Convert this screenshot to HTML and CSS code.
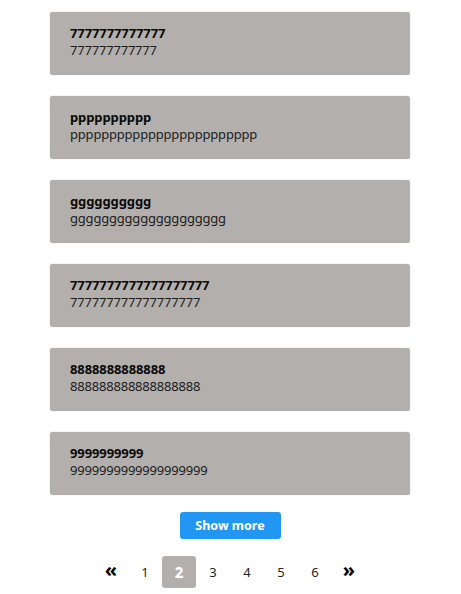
FILE: index.html
```html
<!DOCTYPE html>
<html>
<head>
<meta charset="utf-8">
<link rel="stylesheet" href="styles.css">
</head>
<body>
<div class="page">
  <div class="list">
    <div class="card"><div class="title">7777777777777</div><div class="sub">777777777777</div></div>
    <div class="card"><div class="title">pppppppppp</div><div class="sub">pppppppppppppppppppppppp</div></div>
    <div class="card"><div class="title">gggggggggg</div><div class="sub">gggggggggggggggggggg</div></div>
    <div class="card"><div class="title">7777777777777777777</div><div class="sub">777777777777777777</div></div>
    <div class="card"><div class="title">8888888888888</div><div class="sub">888888888888888888</div></div>
    <div class="card"><div class="title">9999999999</div><div class="sub">9999999999999999999</div></div>
  </div>
  <div class="actions"><button class="more">Show more</button></div>
  <div class="pager">
    <span class="pg arrow">«</span>
    <span class="pg">1</span>
    <span class="pg active">2</span>
    <span class="pg">3</span>
    <span class="pg">4</span>
    <span class="pg">5</span>
    <span class="pg">6</span>
    <span class="pg arrow">»</span>
  </div>
</div>
</body>
</html>
```
FILE: styles.css
```css
html, body { margin: 0; padding: 0; background: #fff; }
body { font-family: "Noto Sans", "Open Sans", sans-serif; font-size: 13px; color: #111; }
.page { width: 360px; margin-left: 50px; padding-top: 12px; }
.list { display: flex; flex-direction: column; gap: 21px; }
.card {
  height: 63px; box-sizing: border-box;
  padding: 13px 20px 0 20px;
  background: #b2afad; border-radius: 3px;
  box-shadow: 0 0 1px rgba(0,0,0,0.35);
}
.title { font-weight: 700; line-height: 17px; color: #0a0a0a; letter-spacing: -0.1px; }
.sub { line-height: 17px; color: #1c1c1c; letter-spacing: -0.2px; }
.actions { display: flex; justify-content: center; margin-top: 17px; }
.more {
  font-family: inherit; font-size: 12.5px; font-weight: 700; color: #fff;
  background: #2196f3; border: none; border-radius: 3px;
  width: 101px; height: 27px; padding: 0; cursor: pointer;
}
.pager { display: flex; justify-content: center; margin-top: 17px; }
.pg {
  width: 34px; height: 32px; display: flex; align-items: center; justify-content: center;
  font-size: 13px; color: #222; border-radius: 3px;
}
.pg.arrow { font-size: 20px; font-weight: 700; color: #000; padding-bottom: 6px; box-sizing: border-box; }
.pg.active { background: #b2afad; color: #fff; font-weight: 800; font-size: 15px; }
```
